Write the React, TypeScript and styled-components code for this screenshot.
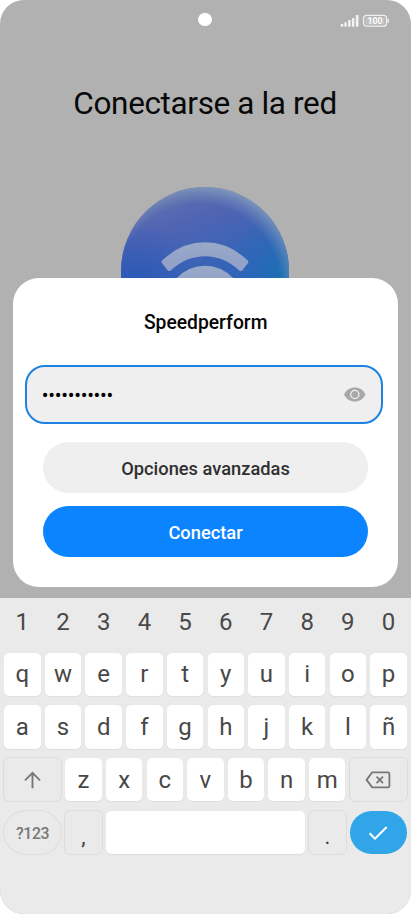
import React from 'react';
import styled, { createGlobalStyle } from 'styled-components';

const GlobalStyle = createGlobalStyle`
  * { box-sizing: border-box; }
  body { margin: 0; background: #fff; }
  button, input { font: inherit; border: 0; padding: 0; margin: 0; }
`;

const Phone = styled.div`
  position: relative;
  display: flex;
  flex-direction: column;
  width: 411px;
  height: 914px;
  border-radius: 24px;
  overflow: hidden;
  background: #b1b1b1;
  font-family: Roboto, sans-serif;
`;

const Screen = styled.main`
  display: flex;
  flex-direction: column;
  height: 597.5px;
  flex: none;
`;

const StatusBar = styled.header`
  display: grid;
  grid-template-columns: 1fr 13.4px 1fr;
  align-items: center;
  height: 39px;
  margin-right: 1px;
`;

const Camera = styled.span`
  width: 13.4px;
  height: 13.4px;
  border-radius: 50%;
  background: #fff;
  grid-column: 2;
`;

const StatusIcons = styled.div`
  display: flex;
  justify-content: flex-end;
  gap: 2px;
  padding-right: 20.5px;
  margin-top: 2px;
`;

const Heading = styled.h1`
  margin: 44px 0 0;
  padding-right: 0.8px;
  text-align: center;
  font-size: 31.5px;
  line-height: 42px;
  font-weight: 400;
  letter-spacing: -0.36px;
  color: #080808;
`;

const Globe = styled.div`
  margin: 62px 0 0 121.3px;
  width: 168px;
  height: 91px;
  overflow: hidden;
  flex: none;
`;

const Dialog = styled.section`
  display: flex;
  flex-direction: column;
  width: 384.5px;
  height: 309px;
  margin: 0 0 0 13.2px;
  padding: 0 15px 0 12px;
  border-radius: 26px;
  background: #fff;
  flex: none;
`;

const NetworkName = styled.h2`
  margin: 33px 0 0;
  padding-left: 3px;
  text-align: center;
  font-size: 19.3px;
  line-height: 24px;
  font-weight: 500;
  color: #060606;
  margin-right: -0.5px;
`;

const Field = styled.label`
  display: flex;
  align-items: center;
  justify-content: space-between;
  height: 59px;
  margin-top: 30.3px;
  padding: 0 15.2px 0 14.6px;
  border: 2.3px solid #1d82e2;
  border-radius: 20px;
  background: #efefef;
`;

const Secret = styled.span`
  font-size: 20px;
  line-height: 24px;
  letter-spacing: -0.27px;
  color: #000;
`;

const Actions = styled.div`
  display: flex;
  flex-direction: column;
  gap: 12.7px;
  padding: 17.7px 14.5px 0 17.7px;
`;

const Action = styled.button<{ $primary?: boolean }>`
  height: 51px;
  padding-top: 2px;
  border-radius: 26px;
  font-size: 18.3px;
  font-weight: 500;
  color: ${p => (p.$primary ? '#fff' : '#303030')};
  background: ${p => (p.$primary ? '#0d84ff' : '#efefef')};
`;

const Keyboard = styled.section`
  display: flex;
  flex-direction: column;
  flex: 1;
  gap: 9.3px;
  padding: 2.5px 4.3px 0 4.1px;
  background: #eaeaea;
  color: #484848;
`;

const KeyRow = styled.div`
  display: flex;
  gap: 4.2px;
  height: 43.4px;
`;

const Key = styled.button<{ $kind?: 'plain' | 'soft' | 'pill' | 'enter'; $width?: number }>`
  display: flex;
  align-items: center;
  justify-content: center;
  flex: ${p => (p.$width ? `0 0 ${p.$width}px` : '1 1 0')};
  height: 43.4px;
  padding-top: ${p => (p.$kind === 'pill' ? '3px' : '0')};
  font-size: ${p => (p.$kind === 'pill' ? '15.8px' : '24px')};
  letter-spacing: ${p => (p.$kind === 'pill' ? '-0.4px' : '0')};
  font-weight: ${p => (p.$kind === 'pill' ? 500 : 400)};
  line-height: 28px;
  color: ${p => (p.$kind === 'pill' || p.$kind === 'soft' ? '#777' : '#484848')};
  border-radius: ${p => (p.$kind === 'pill' || p.$kind === 'enter' ? '22px' : '5px')};
  background: ${p => (p.$kind === 'enter' ? '#30a5e7' : p.$kind ? 'transparent' : '#fff')};
  box-shadow: ${p =>
    p.$kind === 'pill' || p.$kind === 'soft'
      ? '0 0 0 0.8px #d9d9d9'
      : p.$kind
      ? 'none'
      : '0 0.3px 1px #dedede'};
`;

const Punctuation = styled.span`
  padding-top: 9px;
  font-size: 22px;
  color: #404040;
`;

const Signal = () => (
  <svg width="20" height="14" viewBox="0 0 20 14" fill="#f1f1f1">
    <rect x="0.7" y="10" width="2.7" height="2.7" rx=".7" />
    <rect x="4.4" y="8.2" width="2.4" height="4.5" rx=".5" />
    <rect x="8.1" y="6" width="2.5" height="6.7" rx=".5" />
    <rect x="11.9" y="4" width="2.5" height="8.7" rx=".5" />
    <rect x="15.8" y="1" width="2.7" height="11.7" rx=".5" />
  </svg>
);

const Battery = () => (
  <svg width="28" height="14" viewBox="0 0 28 14">
    <rect x="1.5" y="1.4" width="23" height="10.8" rx="3" fill="none" stroke="#f1f1f1" strokeWidth="1.3" />
    <rect x="3.4" y="3.2" width="19.2" height="7.2" rx="1.4" fill="#c4c4c4" />
    <rect x="25.4" y="4.8" width="1.5" height="4" rx=".6" fill="#f1f1f1" />
    <text x="13" y="10" textAnchor="middle" fontFamily="Roboto" fontSize="8.8" fontWeight="500" fill="#fff" textLength="15" lengthAdjust="spacingAndGlyphs">100</text>
  </svg>
);

const WifiOrb = () => (
  <svg width="168" height="168" viewBox="0 0 168 168">
    <defs>
      <linearGradient id="orb" x1="0.35" y1="0" x2="0.6" y2="0.65">
        <stop offset="0" stopColor="#6170ad" />
        <stop offset="0.3" stopColor="#5064b3" />
        <stop offset="0.65" stopColor="#3c64b6" />
        <stop offset="1" stopColor="#2e61bb" />
      </linearGradient>
      <radialGradient id="edge" cx="0.97" cy="0.52" r="0.38">
        <stop offset="0" stopColor="#1c70b4" />
        <stop offset="1" stopColor="#2968b8" stopOpacity="0" />
      </radialGradient>
      <radialGradient id="left" cx="0.08" cy="0.6" r="0.4">
        <stop offset="0" stopColor="#2457b6" />
        <stop offset="1" stopColor="#3358b5" stopOpacity="0" />
      </radialGradient>
      <radialGradient id="rim" cx="0.46" cy="0.59" r="0.61">
        <stop offset="0.8" stopColor="#7c92bc" stopOpacity="0" />
        <stop offset="1" stopColor="#8ca5bd" stopOpacity="0.85" />
      </radialGradient>
      <linearGradient id="arc" x1="0" y1="0" x2="0" y2="1">
        <stop offset="0" stopColor="#97a9c8" />
        <stop offset="1" stopColor="#929fc8" />
      </linearGradient>
    </defs>
    <circle cx="84" cy="84" r="84" fill="url(#orb)" />
    <circle cx="84" cy="84" r="84" fill="url(#edge)" />
    <circle cx="84" cy="84" r="84" fill="url(#left)" />
    <circle cx="84" cy="84" r="84" fill="url(#rim)" />
    <path d="M41.1 73.6Q40 74.8 41.1 76.2L46.8 83.4Q48.2 84.8 49.7 83.4Q65 69.2 84 69.2T118.2 83.4Q119.8 84.8 121.2 83.4L126.9 76.2Q128 74.8 126.8 73.6Q108 55.3 84 55.3T41.1 73.6Z" fill="url(#arc)" />
    <path d="M53 94Q66 78.7 84 78.7T115 94L104 106H64Z" fill="url(#arc)" />
  </svg>
);

const Eye = () => (
  <svg width="22" height="15" viewBox="0 0 22 15">
    <path d="M0 7.5C2.2 3 6.2 .5 10.8 .5S19.4 3 21.5 7.5C19.4 12 15.4 14.5 10.8 14.5S2.2 12 0 7.5Z" fill="#a8a8a8" />
    <circle cx="10.8" cy="7.5" r="4.1" fill="#a8a8a8" stroke="#efefef" strokeWidth="1.3" />
  </svg>
);

const Shift = () => (
  <svg width="18" height="18" viewBox="0 0 18 18" fill="none" stroke="#777" strokeWidth="1.9">
    <path d="M8.5 17.3V2M1 9.4L8.5 1.9L16 9.4" />
  </svg>
);

const Backspace = () => (
  <svg width="26" height="18" viewBox="0 0 26 18" fill="none" stroke="#777" strokeWidth="1.8">
    <path d="M7.2 1.3H23Q24.4 1.3 24.4 2.7V15Q24.4 16.4 23 16.4H7.2L1.6 8.9Z" strokeLinejoin="round" />
    <path d="M11.6 5.7L18 12.1M18 5.7L11.6 12.1" />
  </svg>
);

const Check = () => (
  <svg width="20" height="18" viewBox="0 0 20 18" fill="none" stroke="#fff" strokeWidth="2">
    <path d="M1.6 10.3L7 15.6L18.7 4" />
  </svg>
);

export default function App() {
  return (
    <>
      <GlobalStyle />
      <Phone>
        <Screen>
          <StatusBar>
            <Camera />
            <StatusIcons>
              <Signal />
              <Battery />
            </StatusIcons>
          </StatusBar>
          <Heading>Conectarse a la red</Heading>
          <Globe><WifiOrb /></Globe>
          <Dialog>
            <NetworkName>Speedperform</NetworkName>
            <Field>
              <Secret>•••••••••••</Secret>
              <Eye />
            </Field>
            <Actions>
              <Action>Opciones avanzadas</Action>
              <Action $primary>Conectar</Action>
            </Actions>
          </Dialog>
        </Screen>
        <Keyboard>
          <KeyRow>{[...'1234567890'].map(k => <Key key={k} $kind="plain">{k}</Key>)}</KeyRow>
          <KeyRow>{[...'qwertyuiop'].map(k => <Key key={k}>{k}</Key>)}</KeyRow>
          <KeyRow>{[...'asdfghjklñ'].map(k => <Key key={k}>{k}</Key>)}</KeyRow>
          <KeyRow>
            <Key $kind="soft" $width={57}><Shift /></Key>
            {[...'zxcvbnm'].map(k => <Key key={k}>{k}</Key>)}
            <Key $kind="soft" $width={57}><Backspace /></Key>
          </KeyRow>
          <KeyRow>
            <Key $kind="pill" $width={57}>?123</Key>
            <Key $kind="soft" $width={36.4}><Punctuation>,</Punctuation></Key>
            <Key aria-label="Espacio" />
            <Key $kind="soft" $width={36.4}><Punctuation>.</Punctuation></Key>
            <Key $kind="enter" $width={57}><Check /></Key>
          </KeyRow>
        </Keyboard>
      </Phone>
    </>
  );
}
